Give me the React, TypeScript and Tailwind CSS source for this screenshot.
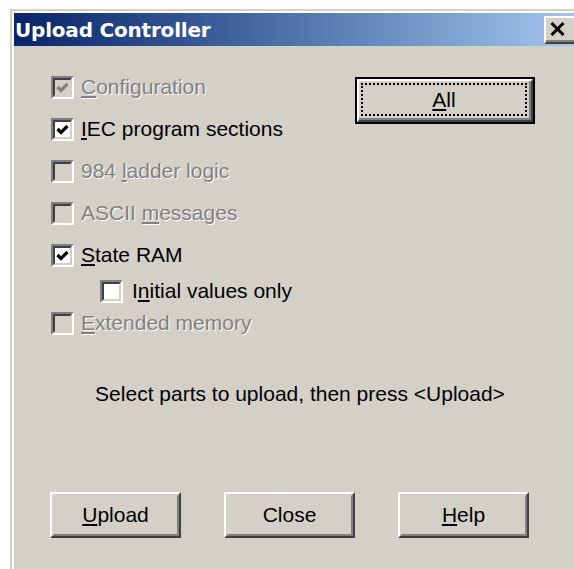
import type { ReactNode } from 'react';

const disabledText = 'text-[#808080] [text-shadow:1px_1px_0_#ffffff]';

function CheckBox({ checked, disabled }: { checked?: boolean; disabled?: boolean }) {
  return (
    <span className="flex h-[23px] w-[23px] shrink-0 border-2 border-t-[#808080] border-l-[#808080] border-b-white border-r-white">
      <span
        className={
          disabled
            ? 'flex flex-1 items-center justify-center border-2 border-t-[#404040] border-l-[#404040] border-b-[#d4d0c8] border-r-[#d4d0c8] bg-[#d4d0c8]'
            : 'flex flex-1 items-center justify-center border-2 border-t-[#404040] border-l-[#404040] border-b-[#d4d0c8] border-r-[#d4d0c8] bg-white'
        }
      >
        {checked && (
          <svg width="15" height="15" viewBox="0 0 15 15">
            <polyline
              points="2.5,7 6,10.5 12.5,4"
              fill="none"
              stroke={disabled ? '#808080' : '#000000'}
              strokeWidth="3.2"
            />
          </svg>
        )}
      </span>
    </span>
  );
}

function Option({
  label,
  checked,
  disabled,
  className,
}: {
  label: ReactNode;
  checked?: boolean;
  disabled?: boolean;
  className: string;
}) {
  return (
    <div className={className}>
      <CheckBox checked={checked} disabled={disabled} />
      <span className={disabled ? disabledText : ''}>{label}</span>
    </div>
  );
}

function Button({ children }: { children: ReactNode }) {
  return (
    <div className="h-[46px] w-[131px] border-2 border-t-white border-l-white border-b-[#404040] border-r-[#404040]">
      <div className="flex h-full items-center justify-center border-2 border-t-[#d4d0c8] border-l-[#d4d0c8] border-b-[#808080] border-r-[#808080]">
        {children}
      </div>
    </div>
  );
}

const u = (s: string) => <span className="underline underline-offset-2">{s}</span>;

export default function App() {
  return (
    <div className="h-[569px] w-[574px] overflow-hidden bg-white pl-[10px] pt-[9px] font-['Liberation_Sans',Arial,sans-serif] text-[21px] text-black">
      <div className="h-[600px] w-[580px] border-2 border-[#d4d0c8]">
        <div className="h-full border-2 border-t-white border-l-white border-b-[#808080] border-r-[#808080] bg-[#d4d0c8]">
          {/* caption */}
          <div className="flex h-[33px] items-center justify-between bg-linear-to-r from-[#0a246a] to-[#a6caf0] pl-[1px] pr-[6px]">
            <span className="font-['DejaVu_Sans',sans-serif] text-[20px] font-bold tracking-[-0.2px] text-white">
              Upload Controller
            </span>
            <div className="h-[28px] w-[36px] border-2 border-t-white border-l-white border-b-[#404040] border-r-[#404040] bg-[#d4d0c8]">
              <div className="flex h-full items-center border-b-2 border-r-2 border-[#808080] pl-[4px]">
                <svg width="15" height="14" viewBox="0 0 15 14">
                  <path d="M1.5 1 L13.5 13 M13.5 1 L1.5 13" stroke="#000" strokeWidth="3" />
                </svg>
              </div>
            </div>
          </div>

          {/* client area */}
          <div className="pt-[20px]">
            <div className="flex">
              <div className="w-[341px] pl-[37px]">
                <Option className="flex h-[42px] items-center gap-[7px]" checked disabled label={<>{u('C')}onfiguration</>} />
                <Option className="flex h-[42px] items-center gap-[7px]" checked label={<>{u('I')}EC program sections</>} />
                <Option className="flex h-[42px] items-center gap-[7px]" disabled label={<>984 {u('l')}adder logic</>} />
                <Option className="flex h-[42px] items-center gap-[7px]" disabled label={<>ASCII {u('m')}essages</>} />
                <Option className="flex h-[42px] items-center gap-[7px]" checked label={<>{u('S')}tate RAM</>} />
                <Option className="ml-[49px] flex h-[30px] items-center gap-[9px]" label={<>I{u('n')}itial values only</>} />
                <Option className="flex h-[34px] items-center gap-[7px]" disabled label={<>{u('E')}xtended memory</>} />
              </div>
              <div className="pt-[11px]">
                <div className="h-[47px] w-[180px] border-2 border-black">
                  <div className="h-full border-2 border-t-white border-l-white border-b-[#404040] border-r-[#404040]">
                    <div className="h-full border-b-2 border-r-2 border-[#808080] p-[2px]">
                      <div className="flex h-full items-center justify-center border-2 border-dotted border-black">
                        {u('A')}ll
                      </div>
                    </div>
                  </div>
                </div>
              </div>
            </div>

            <p className="mt-[42px] text-center leading-[24px]">Select parts to upload, then press &lt;Upload&gt;</p>

            <div className="mt-[86px] flex gap-[43px] pl-[36px]">
              <Button>{u('U')}pload</Button>
              <Button>Close</Button>
              <Button>{u('H')}elp</Button>
            </div>
          </div>
        </div>
      </div>
    </div>
  );
}
